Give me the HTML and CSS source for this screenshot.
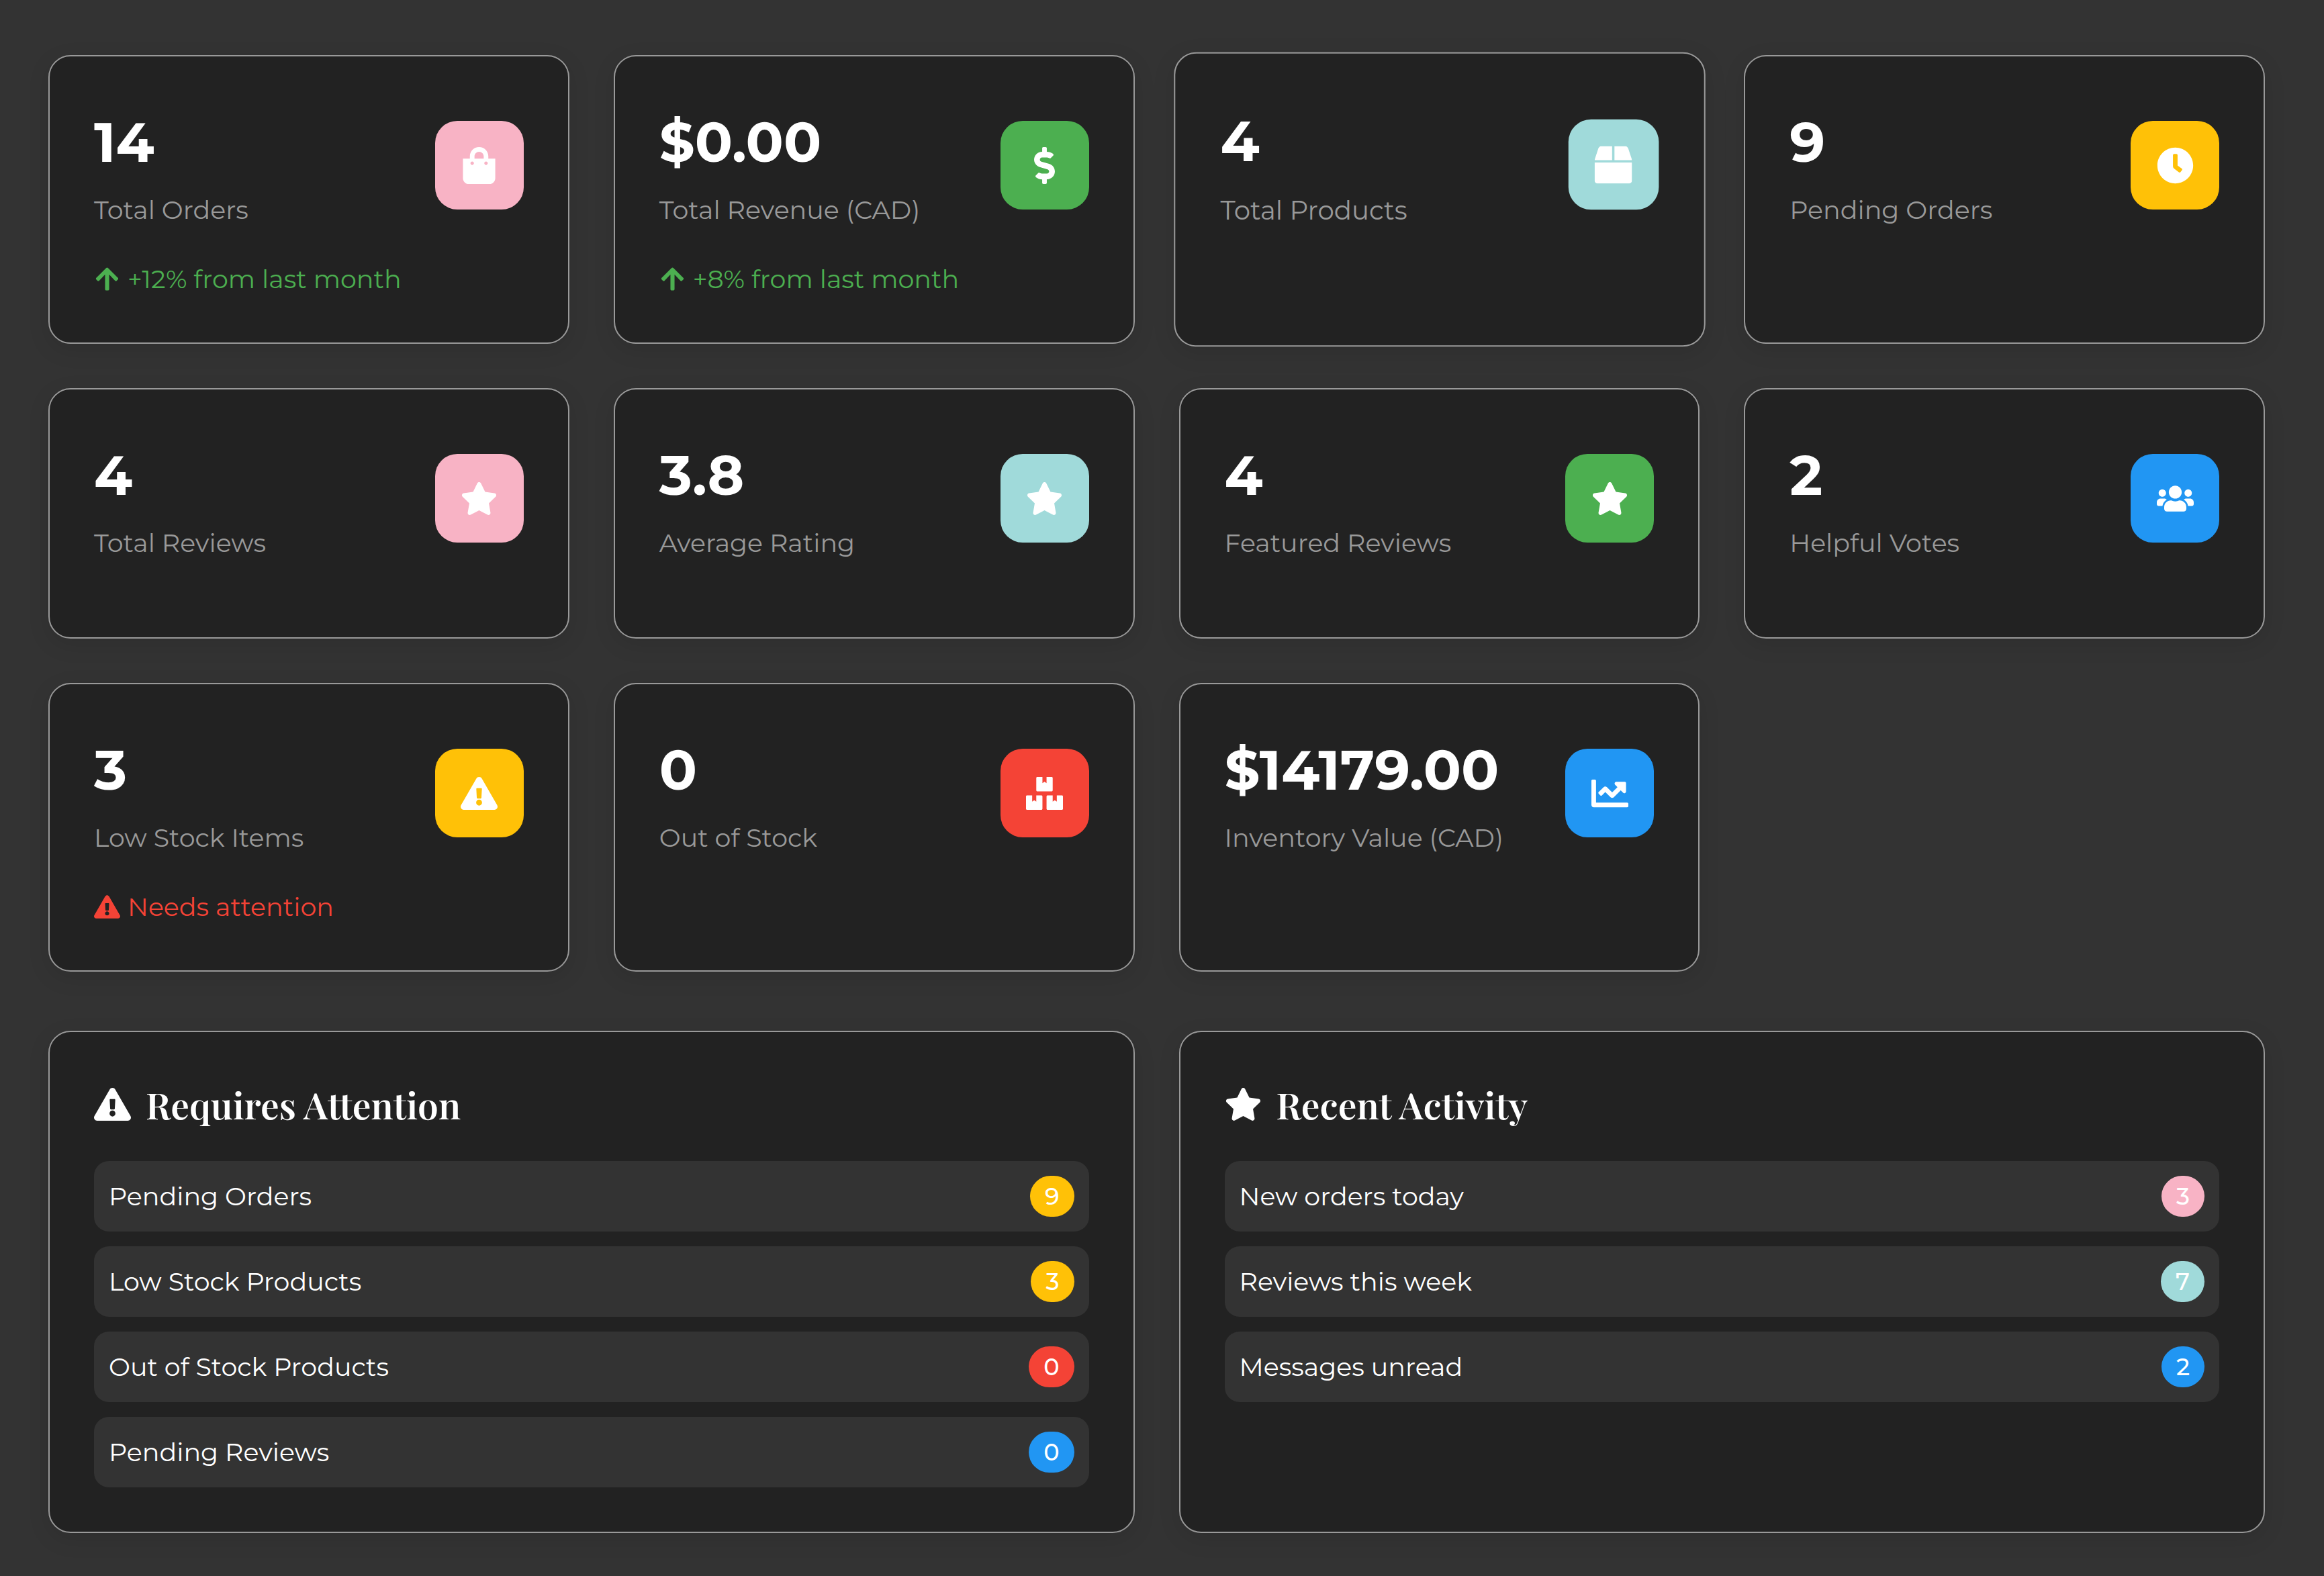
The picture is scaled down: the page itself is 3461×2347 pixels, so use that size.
FILE: index.html
```html
<!DOCTYPE html>
<html lang="en">
<head>
<meta charset="utf-8">
<title>Dashboard</title>
<link rel="stylesheet" href="styles.css">
</head>
<body>
<svg class="sprite" aria-hidden="true">
  <symbol id="bag" viewBox="0 0 448 512"><path d="M352 160v-32C352 57.42 294.579 0 224 0 153.42 0 96 57.42 96 128v32H0v272c0 44.183 35.817 80 80 80h288c44.183 0 80-35.817 80-80V160h-96zm-192-32c0-35.29 28.71-64 64-64s64 28.71 64 64v32H160v-32zm160 120c-13.255 0-24-10.745-24-24s10.745-24 24-24 24 10.745 24 24-10.745 24-24 24zm-192 0c-13.255 0-24-10.745-24-24s10.745-24 24-24 24 10.745 24 24-10.745 24-24 24z"/></symbol>
  <symbol id="dollar" viewBox="0 0 288 512"><path d="M209.2 233.4l-108-31.6C88.7 198.2 80 186.5 80 173.5c0-16.3 13.2-29.5 29.5-29.5h66.3c12.2 0 24.2 3.7 34.2 10.5 6.1 4.1 14.3 3.1 19.5-2l34.8-34c7.1-6.9 6.1-18.4-1.8-24.5C238 74.8 207.4 64.1 176 64V16c0-8.8-7.2-16-16-16h-32c-8.8 0-16 7.2-16 16v48h-2.5C45.8 64-5.4 118.7.5 183.6c4.2 46.1 39.4 83.6 83.8 96.6l102.5 30c12.5 3.7 21.2 15.3 21.2 28.3 0 16.3-13.2 29.5-29.5 29.5h-66.3C100 368 88 364.3 78 357.5c-6.1-4.1-14.3-3.1-19.5 2l-34.8 34c-7.1 6.9-6.1 18.4 1.8 24.5 24.5 19.2 55.1 29.9 86.5 30v48c0 8.8 7.2 16 16 16h32c8.8 0 16-7.2 16-16v-48.2c46.6-.9 90.3-28.6 105.7-72.7 21.5-61.6-14.6-124.8-72.5-141.7z"/></symbol>
  <symbol id="box" viewBox="0 0 512 512"><path d="M509.5 184.6L458.9 32.8C452.4 13.2 434.1 0 413.4 0H272v192h238.7c-.4-2.5-.4-5-1.2-7.4zM240 0H98.6c-20.7 0-39 13.2-45.5 32.8L2.5 184.6c-.8 2.4-.8 4.9-1.2 7.4H240V0zM0 224v240c0 26.5 21.5 48 48 48h416c26.5 0 48-21.5 48-48V224H0z"/></symbol>
  <symbol id="clock" viewBox="0 0 512 512"><path d="M256,8C119,8,8,119,8,256S119,504,256,504,504,393,504,256,393,8,256,8Zm92.49,313h0l-20,25a16,16,0,0,1-22.49,2.5h0l-67-49.72a40,40,0,0,1-15-31.23V112a16,16,0,0,1,16-16h32a16,16,0,0,1,16,16V256l58,42.5A16,16,0,0,1,348.49,321Z"/></symbol>
  <symbol id="star" viewBox="0 0 576 512"><path d="M259.3 17.8L194 150.2 47.9 171.5c-26.2 3.8-36.7 36.1-17.7 54.6l105.7 103-25 145.5c-4.5 26.3 23.2 46 46.4 33.7L288 439.6l130.7 68.7c23.2 12.2 50.9-7.4 46.4-33.7l-25-145.5 105.7-103c19-18.5 8.5-50.8-17.7-54.6L382 150.2 316.7 17.8c-11.7-23.6-45.6-23.9-57.4 0z"/></symbol>
  <symbol id="users" viewBox="0 0 640 512"><path d="M96 224c35.3 0 64-28.7 64-64s-28.7-64-64-64-64 28.7-64 64 28.7 64 64 64zm448 0c35.3 0 64-28.7 64-64s-28.7-64-64-64-64 28.7-64 64 28.7 64 64 64zm32 32h-64c-17.6 0-33.5 7.1-45.1 18.6 40.3 22.1 68.9 62 75.1 109.4h66c17.7 0 32-14.3 32-32v-32c0-35.3-28.7-64-64-64zm-256 0c61.9 0 112-50.1 112-112S381.9 32 320 32 208 82.1 208 144s50.1 112 112 112zm76.8 32h-8.3c-20.8 10-43.9 16-68.5 16s-47.6-6-68.5-16h-8.3C179.6 288 128 339.6 128 403.2V432c0 26.5 21.5 48 48 48h288c26.5 0 48-21.5 48-48v-28.8c0-63.6-51.6-115.2-115.2-115.2zm-223.7-13.4C161.5 263.1 145.6 256 128 256H64c-35.3 0-64 28.7-64 64v32c0 17.7 14.3 32 32 32h65.9c6.3-47.4 34.9-87.3 75.2-109.4z"/></symbol>
  <symbol id="warning" viewBox="0 0 576 512"><path d="M569.517 440.013C587.975 472.007 564.806 512 527.94 512H48.054c-36.937 0-59.999-40.055-41.577-71.987L246.423 23.985c18.467-32.009 64.72-31.951 83.154 0l239.94 416.028zM288 354c-25.405 0-46 20.595-46 46s20.595 46 46 46 46-20.595 46-46-20.595-46-46-46zm-43.673-165.346l7.418 136c.347 6.364 5.609 11.346 11.982 11.346h48.546c6.373 0 11.635-4.982 11.982-11.346l7.418-136c.375-6.874-5.098-12.654-11.982-12.654h-63.383c-6.884 0-12.356 5.78-11.981 12.654z"/></symbol>
  <symbol id="boxes" viewBox="0 0 576 512"><path d="M560 288h-80v96l-32-21.3-32 21.3v-96h-80c-8.8 0-16 7.2-16 16v192c0 8.8 7.2 16 16 16h224c8.8 0 16-7.2 16-16V304c0-8.8-7.2-16-16-16zm-384-64h224c8.8 0 16-7.2 16-16V16c0-8.8-7.2-16-16-16h-80v96l-32-21.3L256 96V0h-80c-8.8 0-16 7.2-16 16v192c0 8.8 7.2 16 16 16zm64 64h-80v96l-32-21.3L96 384v-96H16c-8.8 0-16 7.2-16 16v192c0 8.8 7.2 16 16 16h224c8.8 0 16-7.2 16-16V304c0-8.8-7.2-16-16-16z"/></symbol>
  <symbol id="chart" viewBox="0 0 512 512"><path d="M496 384H64V80c0-8.84-7.16-16-16-16H16C7.16 64 0 71.16 0 80v336c0 17.67 14.33 32 32 32h464c8.84 0 16-7.16 16-16v-32c0-8.84-7.16-16-16-16zM464 96H345.94c-21.38 0-32.09 25.85-16.97 40.97l32.4 32.4L288 242.75l-73.37-73.37c-12.5-12.5-32.76-12.5-45.25 0l-68.69 68.69c-6.25 6.25-6.25 16.38 0 22.63l22.62 22.62c6.25 6.25 16.38 6.25 22.63 0L192 237.25l73.37 73.37c12.5 12.5 32.76 12.5 45.25 0l96-96 32.4 32.4c15.12 15.12 40.97 4.41 40.97-16.97V112c.01-8.84-7.15-16-15.99-16z"/></symbol>
  <symbol id="arrow" viewBox="0 0 448 512"><path d="M34.9 289.5l-22.2-22.2c-9.4-9.4-9.4-24.6 0-33.9L207 39c9.4-9.4 24.6-9.4 33.9 0l194.3 194.3c9.4 9.4 9.4 24.6 0 33.9L413 289.4c-9.5 9.5-25 9.3-34.3-.4L264 168.6V456c0 13.3-10.7 24-24 24h-32c-13.3 0-24-10.7-24-24V168.6L69.2 289.1c-9.3 9.8-24.8 10-34.3.4z"/></symbol>
</svg>
<main class="dashboard">
  <section class="stats">
    <article class="card stat">
      <div class="stat-head">
        <div><div class="value">14</div><div class="label">Total Orders</div></div>
        <div class="tile pink"><svg class="icon"><use href="#bag"/></svg></div>
      </div>
      <p class="trend up"><svg class="icon-small"><use href="#arrow"/></svg>+12% from last month</p>
    </article>
    <article class="card stat">
      <div class="stat-head">
        <div><div class="value">$0.00</div><div class="label">Total Revenue (CAD)</div></div>
        <div class="tile green"><svg class="icon"><use href="#dollar"/></svg></div>
      </div>
      <p class="trend up"><svg class="icon-small"><use href="#arrow"/></svg>+8% from last month</p>
    </article>
    <article class="card stat raised">
      <div class="stat-head">
        <div><div class="value">4</div><div class="label">Total Products</div></div>
        <div class="tile teal"><svg class="icon"><use href="#box"/></svg></div>
      </div>
    </article>
    <article class="card stat">
      <div class="stat-head">
        <div><div class="value">9</div><div class="label">Pending Orders</div></div>
        <div class="tile yellow"><svg class="icon"><use href="#clock"/></svg></div>
      </div>
    </article>
    <article class="card stat">
      <div class="stat-head">
        <div><div class="value">4</div><div class="label">Total Reviews</div></div>
        <div class="tile pink"><svg class="icon"><use href="#star"/></svg></div>
      </div>
    </article>
    <article class="card stat">
      <div class="stat-head">
        <div><div class="value">3.8</div><div class="label">Average Rating</div></div>
        <div class="tile teal"><svg class="icon"><use href="#star"/></svg></div>
      </div>
    </article>
    <article class="card stat">
      <div class="stat-head">
        <div><div class="value">4</div><div class="label">Featured Reviews</div></div>
        <div class="tile green"><svg class="icon"><use href="#star"/></svg></div>
      </div>
    </article>
    <article class="card stat">
      <div class="stat-head">
        <div><div class="value">2</div><div class="label">Helpful Votes</div></div>
        <div class="tile blue"><svg class="icon"><use href="#users"/></svg></div>
      </div>
    </article>
    <article class="card stat">
      <div class="stat-head">
        <div><div class="value">3</div><div class="label">Low Stock Items</div></div>
        <div class="tile yellow"><svg class="icon"><use href="#warning"/></svg></div>
      </div>
      <p class="trend down"><svg class="icon-small"><use href="#warning"/></svg>Needs attention</p>
    </article>
    <article class="card stat">
      <div class="stat-head">
        <div><div class="value">0</div><div class="label">Out of Stock</div></div>
        <div class="tile red"><svg class="icon"><use href="#boxes"/></svg></div>
      </div>
    </article>
    <article class="card stat">
      <div class="stat-head">
        <div><div class="value">$14179.00</div><div class="label">Inventory Value (CAD)</div></div>
        <div class="tile blue"><svg class="icon"><use href="#chart"/></svg></div>
      </div>
    </article>
  </section>
  <section class="panels">
    <article class="card">
      <h2 class="title"><svg class="icon"><use href="#warning"/></svg>Requires Attention</h2>
      <ul class="list">
        <li class="row">Pending Orders<span class="badge yellow">9</span></li>
        <li class="row">Low Stock Products<span class="badge yellow">3</span></li>
        <li class="row">Out of Stock Products<span class="badge red">0</span></li>
        <li class="row">Pending Reviews<span class="badge blue">0</span></li>
      </ul>
    </article>
    <article class="card">
      <h2 class="title"><svg class="icon"><use href="#star"/></svg>Recent Activity</h2>
      <ul class="list">
        <li class="row">New orders today<span class="badge pink">3</span></li>
        <li class="row">Reviews this week<span class="badge teal">7</span></li>
        <li class="row">Messages unread<span class="badge blue">2</span></li>
      </ul>
    </article>
  </section>
</main>
</body>
</html>
```
FILE: styles.css
```css
* {
  box-sizing: border-box;
}

body {
  margin: 0;
  background: #333;
  color: #fff;
  font-family: Montserrat, Inter, sans-serif;
  font-size: 38px;
}

.sprite {
  display: none;
}

.dashboard {
  padding: 82px 88px 64px 72px;
}

.stats {
  display: grid;
  grid-template-columns: repeat(4, 1fr);
  gap: 66px;
  margin-bottom: 88px;
}

.panels {
  display: grid;
  grid-template-columns: repeat(2, 1fr);
  gap: 66px;
}

.card {
  padding: 66px;
  background: #222;
  border: 2px solid #999;
  border-radius: 33px;
  box-shadow: 0 9px 33px rgba(0, 0, 0, 0.1);
}

.raised {
  transform: scale(1.02);
}

.stat-head {
  display: flex;
  align-items: center;
  justify-content: space-between;
  margin-bottom: 45px;
}

.value {
  font-size: 83px;
  font-weight: 700;
  line-height: 124px;
}

.label {
  margin-top: 10px;
  color: #999;
  line-height: 58px;
  white-space: nowrap;
}

.tile {
  display: flex;
  flex: none;
  align-items: center;
  justify-content: center;
  width: 132px;
  height: 132px;
  border-radius: 33px;
}

.icon {
  width: 55px;
  height: 55px;
  fill: currentColor;
}

.icon-small {
  width: 39px;
  height: 39px;
  fill: currentColor;
}

.trend {
  display: flex;
  align-items: center;
  gap: 11px;
  margin: 0;
  line-height: 57px;
}

.up {
  color: #4caf50;
}

.down {
  color: #f44336;
}

.title {
  display: flex;
  align-items: center;
  gap: 22px;
  margin: 0 0 44px;
  font-family: "Playfair Display", "Liberation Serif", serif;
  font-size: 55px;
  font-weight: 600;
  line-height: 82px;
}

.list {
  display: grid;
  gap: 22px;
  margin: 0;
  padding: 0;
  list-style: none;
}

.row {
  display: flex;
  align-items: center;
  justify-content: space-between;
  padding: 22px;
  background: #333;
  border-radius: 22px;
  line-height: 61px;
}

.badge {
  padding: 0 22px;
  border-radius: 33px;
  font-size: 35px;
  font-weight: 500;
}

.pink {
  background: #f8b3c5;
}

.green {
  background: #4caf50;
}

.teal {
  background: #a0dada;
}

.yellow {
  background: #ffc107;
}

.blue {
  background: #2196f3;
}

.red {
  background: #f44336;
}
```
